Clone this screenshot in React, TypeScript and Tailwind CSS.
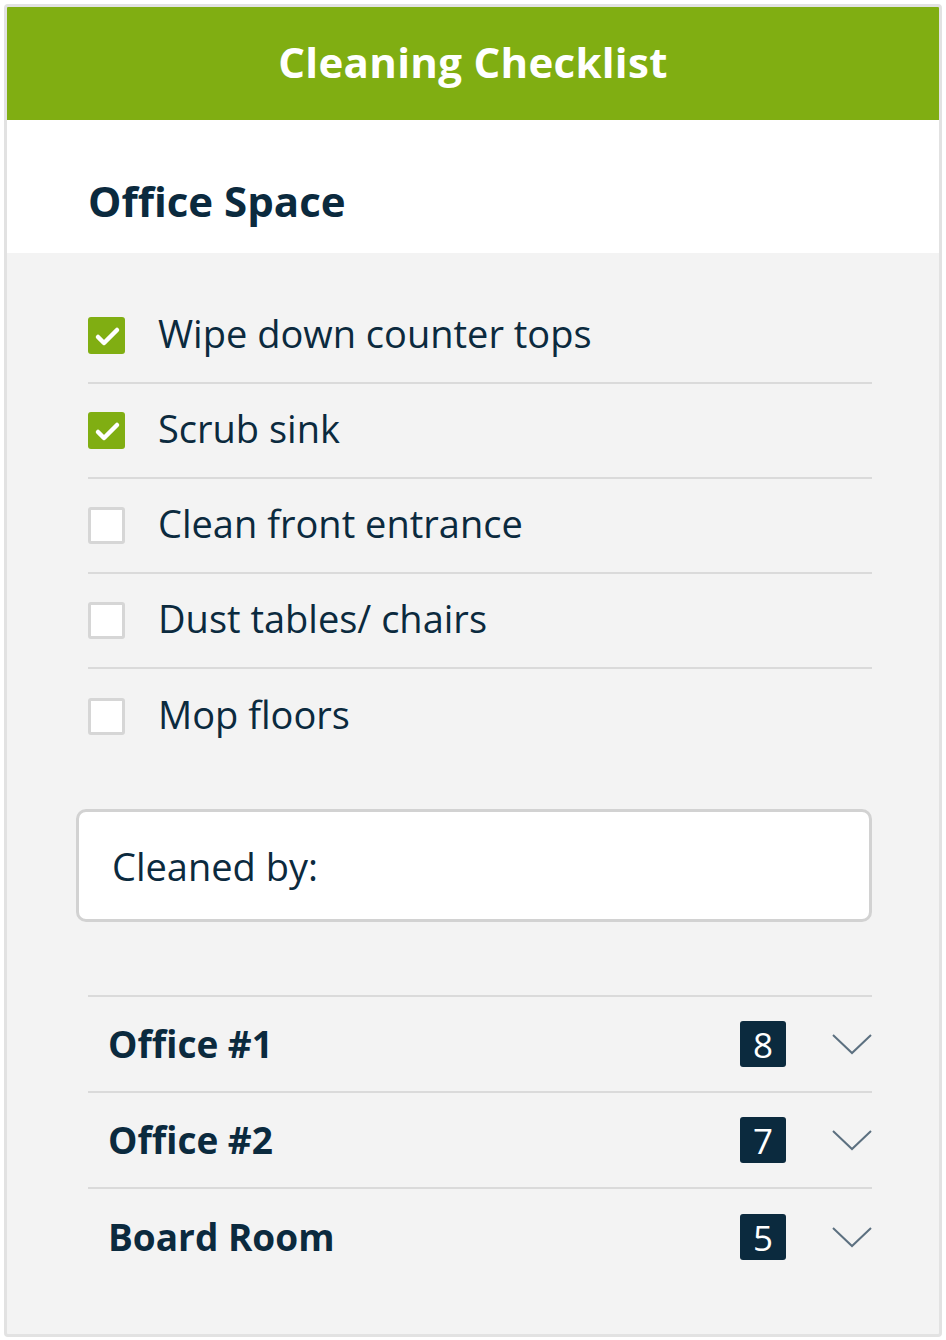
import React, { useState } from "react";

type Task = { id: number; label: string; done: boolean };

const initialTasks: Task[] = [
  { id: 1, label: "Wipe down counter tops", done: true },
  { id: 2, label: "Scrub sink", done: true },
  { id: 3, label: "Clean front entrance", done: false },
  { id: 4, label: "Dust tables/ chairs", done: false },
  { id: 5, label: "Mop floors", done: false },
];

const rooms = [
  { name: "Office #1", count: 8 },
  { name: "Office #2", count: 7 },
  { name: "Board Room", count: 5 },
];

function Check({ on }: { on: boolean }) {
  if (on) {
    return (
      <span className="flex h-[37px] w-[37px] flex-shrink-0 items-center justify-center rounded-[3px] bg-[#80ae12]">
        <svg width="30" height="30" viewBox="0 0 30 30" fill="none">
          <path d="M6 16l6 6L25 9" stroke="white" strokeWidth="4.5" strokeLinecap="round" strokeLinejoin="round" />
        </svg>
      </span>
    );
  }
  return <span className="h-[37px] w-[37px] flex-shrink-0 rounded-[3px] border-[3px] border-[#d6d6d6] bg-white" />;
}

export default function App() {
  const [tasks, setTasks] = useState(initialTasks);
  const [cleaner, setCleaner] = useState("");

  const toggle = (id: number) => {
    setTasks(tasks.map(t => (t.id === id ? { ...t, done: !t.done } : t)));
  };

  return (
    <div className="bg-white p-[4px] font-['Open_Sans',sans-serif] text-[#0b2a3e]">
      <div className="h-[1333px] overflow-hidden rounded-[4px] border-[3px] border-[#e2e2e2] bg-[#f3f3f3]">
        {/* Header */}
        <div className="flex h-[113px] items-center justify-center bg-[#80ae12]">
          <h1 className="-mt-[4px] text-[42px] font-bold tracking-[0.3px] text-white">Cleaning Checklist</h1>
        </div>

        <div className="h-[133px] bg-white pl-[81px] pt-[52px]">
          <h2 className="text-[42px] font-bold leading-[58px]">Office Space</h2>
        </div>

        {/* Tasks */}
        <div className="pl-[81px] pr-[67px] pt-[36px]">
          <ul>
            {tasks.map((task, i) => (
              <li
                key={task.id}
                className={`flex h-[95px] cursor-pointer items-center gap-[33px] ${i < tasks.length - 1 ? "border-b-2 border-[#dadada]" : ""}`}
                onClick={() => toggle(task.id)}
              >
                <Check on={task.done} />
                <span className="-mt-[4px] text-[38px]">{task.label}</span>
              </li>
            ))}
          </ul>

          <div className="-ml-[12px] mt-[45px]">
            <input
              value={cleaner}
              onChange={e => setCleaner(e.target.value)}
              placeholder="Cleaned by:"
              className="h-[113px] w-full rounded-[10px] border-[3px] border-[#d2d2d2] bg-white px-[33px] text-[38px] text-[#0b2a3e] placeholder:text-[#0b2a3e] outline-none"
            />
          </div>

          {/* Rooms */}
          <div className="mt-[73px] border-t-2 border-[#dadada]">
            {rooms.map((room, i) => (
              <div
                key={room.name}
                className={`flex h-[96px] items-center pl-[20px] ${i < rooms.length - 1 ? "border-b-2 border-[#dadada]" : ""}`}
              >
                <span className="flex-1 text-[37px] font-bold">{room.name}</span>
                <span className="flex h-[46px] w-[46px] items-center justify-center rounded-[3px] bg-[#0b2a3e] text-[35px] leading-none text-white">
                  {room.count}
                </span>
                <svg className="ml-[46px]" width="40" height="22" viewBox="0 0 40 22" fill="none">
                  <path d="M1 2l19 18L39 2" stroke="#5c7080" strokeWidth="2" />
                </svg>
              </div>
            ))}
          </div>
        </div>
      </div>
    </div>
  );
}
